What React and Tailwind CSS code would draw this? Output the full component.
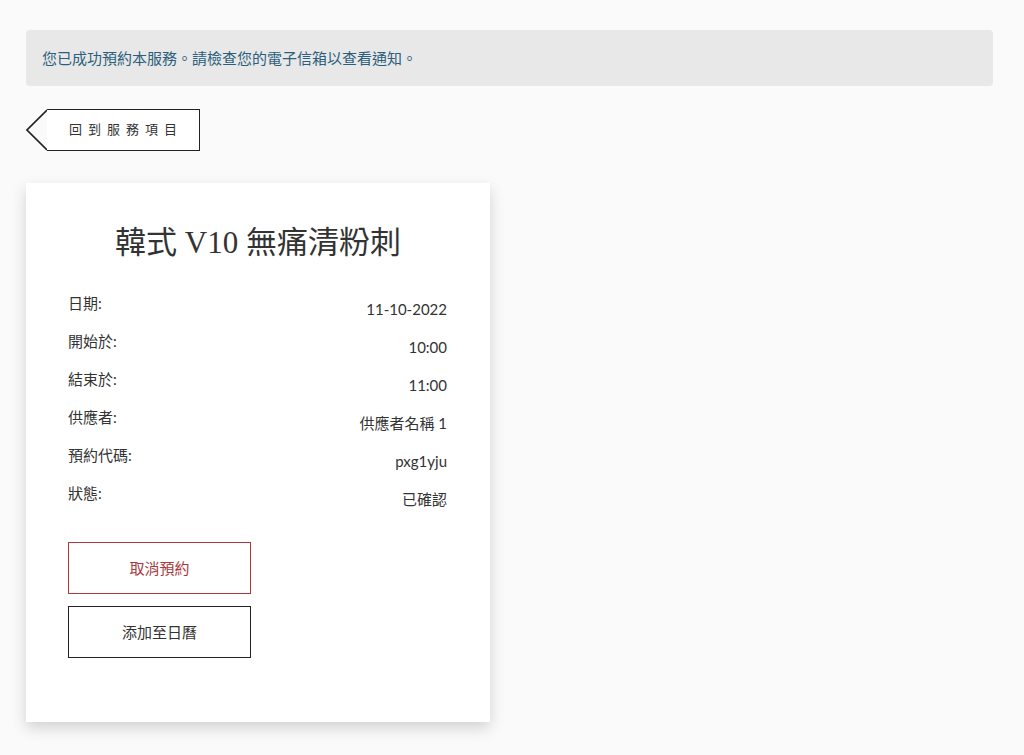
export default function App() {
  const rows = [
    ['日期:', '11-10-2022'],
    ['開始於:', '10:00'],
    ['結束於:', '11:00'],
    ['供應者:', '供應者名稱 1'],
    ['預約代碼:', 'pxg1yju'],
    ['狀態:', '已確認'],
  ];

  return (
    <div
      lang="zh-Hant"
      className="min-h-[755px] bg-[#fafafa] pl-[26px] pt-[30px] pb-10 text-[#333]"
      style={{ fontFamily: 'Lato, "Noto Sans CJK TC", sans-serif' }}
    >
      {/* alert */}
      <div className="w-[967px] h-[56px] flex items-center px-4 rounded bg-[#e8e8e8] text-[15px] text-[#2b5f7c]">
        您已成功預約本服務。請檢查您的電子信箱以查看通知。
      </div>

      {/* back button */}
      <button className="mt-[23px] flex h-[42px] items-stretch">
        <svg width="21" height="42" viewBox="0 0 21 42" className="block">
          <polyline points="21,1 1,21 21,41" fill="none" stroke="#222" strokeWidth="1.6" />
        </svg>
        <span className="flex items-center border-y-[1.6px] border-r-[1.6px] border-[#222] bg-white pl-[22px] pr-[16px] text-[13px] tracking-[6px] text-[#333]">
          回到服務項目
        </span>
      </button>

      {/* card */}
      <div className="mt-[32px] w-[464px] bg-white pt-[40px] pb-[64px] px-[42px] shadow-[0_6px_14px_rgba(0,0,0,0.16)]">
        <h1
          className="text-center text-[31px] leading-[40px] text-[#333]"
          style={{ fontFamily: '"Liberation Serif", "Noto Sans CJK TC", serif' }}
        >
          韓式 V10 無痛清粉刺
        </h1>

        <div className="mt-[28px]">
          {rows.map(([label, value]) => (
            <div key={label} className="flex h-[38px] items-start justify-between pr-px text-[15px]">
              <span className="leading-[24px]">{label}</span>
              <span className="pt-[6px] leading-[24px]">{value}</span>
            </div>
          ))}
        </div>

        <div className="mt-[23px] flex flex-col gap-[12px]">
          <button className="h-[52px] w-[183px] border-[1.6px] border-[#a9393b] text-[15px] text-[#a9393b]">
            取消預約
          </button>
          <button className="h-[52px] w-[183px] border-[1.6px] border-[#222] text-[15px] text-[#333]">
            添加至日曆
          </button>
        </div>
      </div>
    </div>
  );
}
